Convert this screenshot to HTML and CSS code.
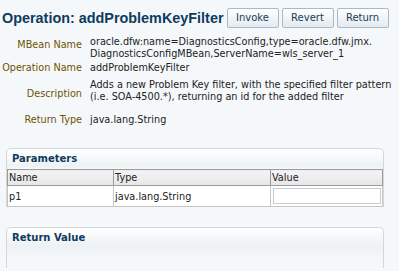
FILE: index.html
```html
<!DOCTYPE html>
<html lang="en">
<head>
  <meta charset="UTF-8">
  <title>Operation: addProblemKeyFilter</title>
  <link rel="stylesheet" href="styles.css">
</head>
<body>
  <div class="op-header">
    <h1 class="op-title">Operation: addProblemKeyFilter</h1>
    <div class="op-buttons">
      <button class="op-button">Invoke</button>
      <button class="op-button">Revert</button>
      <button class="op-button">Return</button>
    </div>
  </div>

  <div class="op-info">
    <div class="info-label label-mbean">MBean Name</div>
    <div class="info-value">oracle.dfw:name=DiagnosticsConfig,type=oracle.dfw.jmx.<br>DiagnosticsConfigMBean,ServerName=wls_server_1</div>

    <div class="info-label">Operation Name</div>
    <div class="info-value">addProblemKeyFilter</div>

    <div class="info-label row-desc label-desc">Description</div>
    <div class="info-value row-desc">Adds a new Problem Key filter, with the specified filter pattern<br>(i.e. SOA-4500.*), returning an id for the added filter</div>

    <div class="info-label row-return">Return Type</div>
    <div class="info-value row-return">java.lang.String</div>
  </div>

  <div class="panel">
    <div class="panel-header">Parameters</div>
    <table class="param-table">
      <thead>
        <tr>
          <th class="col-name">Name</th>
          <th class="col-type">Type</th>
          <th class="col-value">Value</th>
        </tr>
      </thead>
      <tbody>
        <tr>
          <td>p1</td>
          <td>java.lang.String</td>
          <td><input type="text" class="value-input"></td>
        </tr>
      </tbody>
    </table>
  </div>

  <div class="panel panel-return">
    <div class="panel-header">Return Value</div>
  </div>
</body>
</html>
```

FILE: styles.css
```css
body {
  margin: 0;
  background-color: #f5f8fa;
  font-family: "DejaVu Sans", Tahoma, sans-serif;
  font-size: 9.7px;
  color: #222;
}
.op-header {
  display: flex;
  align-items: center;
  padding: 7px 0 0 2px;
  height: 21px;
}
.op-title {
  margin: 0;
  font-family: "Liberation Sans", Arial, sans-serif;
  font-size: 14.4px;
  font-weight: bold;
  color: #0e3b5e;
  white-space: nowrap;
}
.op-buttons {
  display: flex;
  gap: 3px;
  margin-left: 3px;
}
.op-button {
  height: 20px;
  padding: 0 6px;
  font-family: "DejaVu Sans", Tahoma, sans-serif;
  font-size: 10px;
  color: #1d3c58;
  background: linear-gradient(#ffffff, #e3eaf0);
  border: 1px solid #a9b9c7;
  border-radius: 2px;
  min-width: 52px;
}
.op-info {
  display: grid;
  grid-template-columns: 82px 310px;
  column-gap: 8px;
  row-gap: 2px;
  margin-top: 8px;
  line-height: 12px;
}
.info-label {
  text-align: right;
  color: #6e5300;
  align-self: center;
  white-space: nowrap;
}
.info-value {
  color: #222;
  white-space: nowrap;
}
.label-mbean {
  align-self: start;
  padding-top: 3px;
}
.label-desc {
  align-self: start;
  padding-top: 9px;
}
.row-desc {
  margin-top: 3px;
}
.row-return {
  margin-top: 9px;
}
.panel {
  margin: 22px 15px 0 6px;
  border: 1px solid #d3d7da;
  border-bottom: none;
  border-radius: 5px 5px 0 0;
  background: linear-gradient(#ffffff 0, #edf1f3 18px, #f5f8fa 19px);
}
.panel-header {
  padding: 4px 0 3px 5px;
  font-size: 10px;
  font-weight: bold;
  color: #0e3b5e;
  height: 13px;
}
.param-table {
  width: 100%;
  border-collapse: collapse;
  background: #fff;
}
.param-table th {
  text-align: left;
  font-weight: normal;
  height: 15px;
  padding: 0 0 0 1px;
  background: linear-gradient(#f4f4f4, #e6e6e6);
  border: 1px solid #9c9c9c;
}
.param-table td {
  height: 20px;
  padding: 0 0 0 1px;
  border: 1px solid #c6c6c6;
}
.col-name {
  width: 104px;
}
.col-type {
  width: 155px;
}
.value-input {
  display: block;
  box-sizing: border-box;
  width: 108px;
  height: 16px;
  margin-left: 1px;
  border: 1px solid #c8ccd0;
  background: #fff;
}
.panel-return {
  margin-top: 20px;
  height: 40px;
  background: linear-gradient(#ffffff 0, #edf1f3 18px, #f5f8fa 30px);
}
```
